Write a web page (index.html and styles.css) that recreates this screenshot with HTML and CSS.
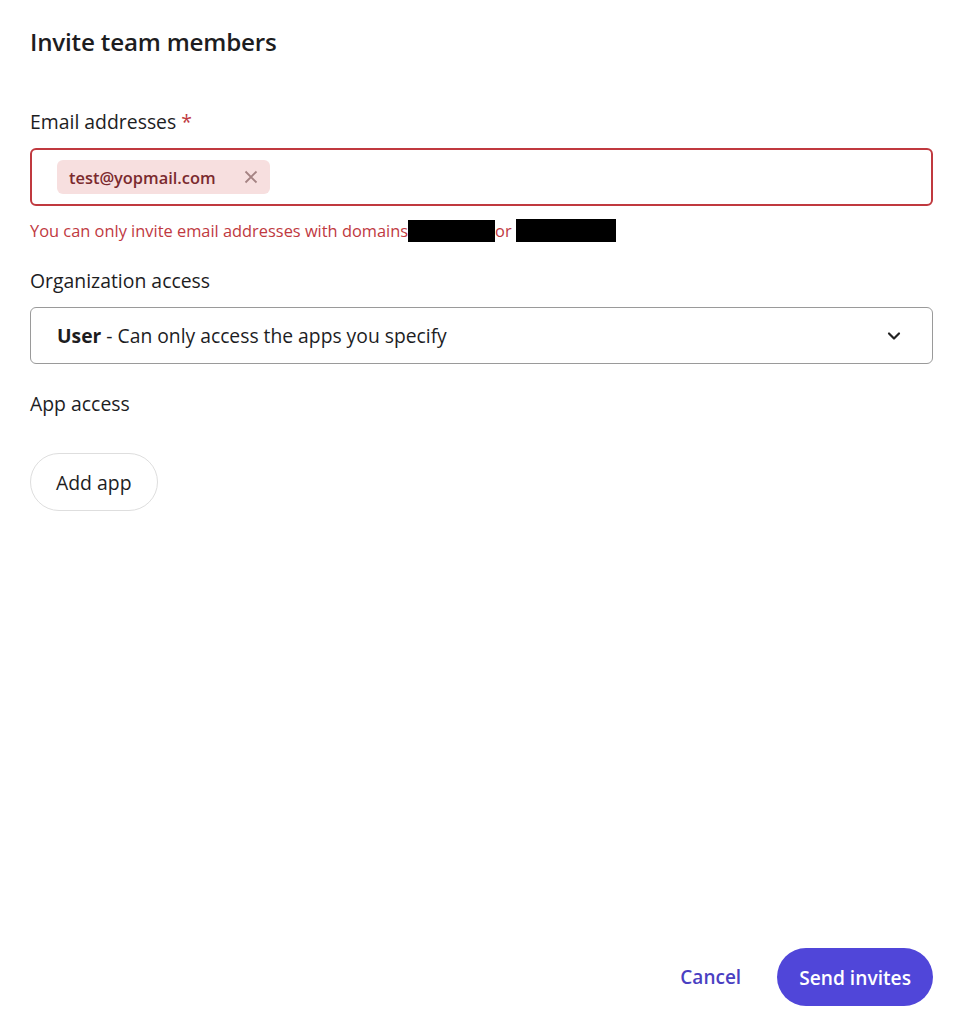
FILE: index.html
```html
<!DOCTYPE html>
<html lang="en">
<head>
    <meta charset="UTF-8">
    <meta name="viewport" content="width=device-width, initial-scale=1.0">
    <title>Invite team members</title>
    <link rel="stylesheet" href="styles.css">
</head>
<body>

    <div class="dialog">
        <h1>Invite team members</h1>

        <!-- Email field with error state -->
        <div class="field field-email">
            <label class="label">Email addresses <span class="required">*</span></label>
            <div class="email-box">
                <span class="chip">
                    test@yopmail.com
                    <svg class="chip-x" width="14" height="14" viewBox="0 0 14 14">
                        <path d="M1.5 1.5 L12.5 12.5 M12.5 1.5 L1.5 12.5" stroke="currentColor" stroke-width="1.8" fill="none"/>
                    </svg>
                </span>
            </div>
            <p class="error">You can only invite email addresses with domains<span class="redact redact-1"></span>or <span class="redact redact-2"></span></p>
        </div>

        <div class="field field-org">
            <label class="label">Organization access</label>
            <div class="select">
                <span><strong>User</strong> - Can only access the apps you specify</span>
                <svg class="chevron" width="16" height="16" viewBox="0 0 16 16">
                    <path d="M3 5.5 L8 10.5 L13 5.5" stroke="currentColor" stroke-width="2.2" fill="none" stroke-linecap="round" stroke-linejoin="round"/>
                </svg>
            </div>
        </div>

        <div class="field field-app">
            <label class="label">App access</label>
            <button class="pill-button">Add app</button>
        </div>

        <div class="footer">
            <button class="link-button">Cancel</button>
            <button class="primary-button">Send invites</button>
        </div>
    </div>

</body>
</html>
```

FILE: styles.css
```css
body {
    margin: 0;
    font-family: "Open Sans", "Noto Sans", sans-serif;
    color: #1d1d1f;
    background-color: #fff;
}

.dialog {
    width: 903px;
    height: 1024px;
    padding: 0 30px;
    box-sizing: content-box;
    display: flex;
    flex-direction: column;
}

h1 {
    font-size: 24.2px;
    font-weight: 600;
    margin: 26px 0 0;
    line-height: 32px;
    letter-spacing: -0.2px;
}

.field {
    display: flex;
    flex-direction: column;
}

.label {
    font-size: 19.4px;
    line-height: 28px;
    margin-bottom: 12px;
}

.field-email .label {
    margin-top: 50px;
}

.field-org .label {
    margin-top: 25px;
}

.field-app .label {
    margin-top: 26px;
    margin-bottom: 35px;
}

.required {
    color: #c0393f;
}

/* Email input in error state */
.email-box {
    height: 54px;
    border: 2px solid #c0393f;
    border-radius: 6px;
    display: flex;
    align-items: center;
    padding: 0 25px;
}

.chip {
    display: inline-flex;
    align-items: center;
    gap: 28px;
    height: 34px;
    padding: 0 12px;
    background-color: #f7dfdf;
    border-radius: 6px;
    font-size: 16.4px;
    font-weight: 600;
    color: #7b2a2e;
}

.chip-x {
    color: #a58383;
}

.error {
    margin: 13px 0 0;
    font-size: 16.4px;
    line-height: 22px;
    color: #c0393f;
    display: flex;
    align-items: center;
}

.redact {
    display: inline-block;
    background-color: #000;
    height: 22px;
}

.redact-1 {
    width: 87px;
}

.redact-2 {
    width: 100px;
    height: 23px;
    margin-left: 4px;
}

/* Organization access dropdown */
.select {
    height: 55px;
    border: 1px solid #9a9a9a;
    border-radius: 6px;
    display: flex;
    align-items: center;
    justify-content: space-between;
    padding: 0 30px 0 26px;
    font-size: 19.3px;
}

.chevron {
    color: #222;
}

.pill-button {
    align-self: flex-start;
    height: 58px;
    padding: 0 25px;
    border: 1px solid #dedede;
    border-radius: 29px;
    background-color: #fff;
    font-family: inherit;
    font-size: 19.4px;
    color: #1d1d1f;
}

.footer {
    margin-top: auto;
    margin-bottom: 18px;
    display: flex;
    justify-content: flex-end;
    align-items: center;
    gap: 36px;
}

.link-button {
    border: none;
    background: none;
    font-family: inherit;
    font-size: 19px;
    font-weight: 600;
    color: #4a3fc2;
    padding: 0;
}

.primary-button {
    height: 58px;
    padding: 0 22px;
    border: none;
    border-radius: 29px;
    background-color: #5046d9;
    color: #fff;
    font-family: inherit;
    font-size: 19.2px;
    font-weight: 600;
}
```
